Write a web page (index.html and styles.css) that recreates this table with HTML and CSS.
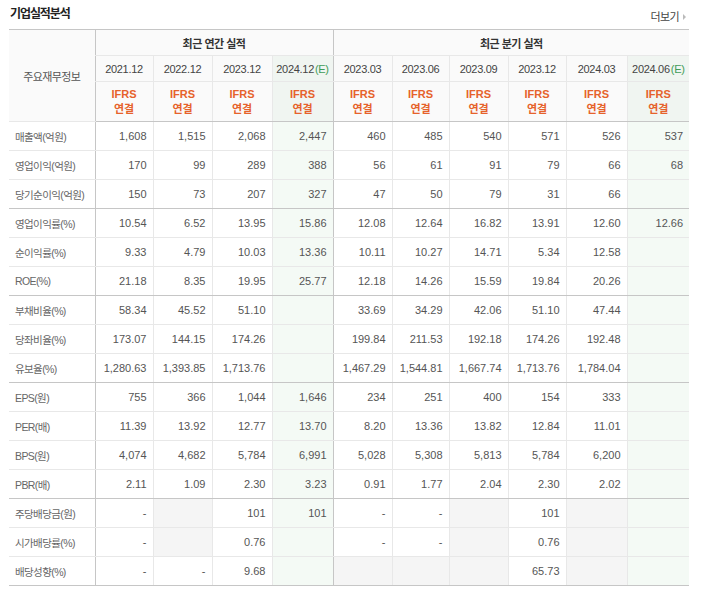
FILE: index.html
```html
<!DOCTYPE html>
<html lang="ko">
<head>
<meta charset="utf-8">
<title>기업실적분석</title>
<link rel="stylesheet" href="styles.css">
</head>
<body>
<div class="wrap">
  <div class="head">
    <h3 class="title">기업실적분석</h3>
    <a class="more" href="#">더보기<span class="tri"></span></a>
  </div>
  <table class="fin">
    <colgroup>
      <col class="c-lbl">
      <col class="c1"><col class="c2"><col class="c3"><col class="c4 ce cg">
      <col class="c5"><col class="c6"><col class="c7"><col class="c8"><col class="c9"><col class="c10 ce clast">
    </colgroup>
    <thead>
      <tr>
        <th class="lbl-h" rowspan="3">주요재무정보</th>
        <th class="grp" colspan="4">최근 연간 실적</th>
        <th class="grp" colspan="6">최근 분기 실적</th>
      </tr>
      <tr class="yr">
        <th>2021.12</th><th>2022.12</th><th>2023.12</th><th class="e">2024.12<span class="est">(E)</span></th>
        <th>2023.03</th><th>2023.06</th><th>2023.09</th><th>2023.12</th><th>2024.03</th><th class="e">2024.06<span class="est">(E)</span></th>
      </tr>
      <tr class="ifrs end">
        <th>IFRS<br>연결</th><th>IFRS<br>연결</th><th>IFRS<br>연결</th><th class="e">IFRS<br>연결</th>
        <th>IFRS<br>연결</th><th>IFRS<br>연결</th><th>IFRS<br>연결</th><th>IFRS<br>연결</th><th>IFRS<br>연결</th><th class="e">IFRS<br>연결</th>
      </tr>
    </thead>
    <tbody>
      <tr><th>매출액(억원)</th><td>1,608</td><td>1,515</td><td>2,068</td><td>2,447</td><td>460</td><td>485</td><td>540</td><td>571</td><td>526</td><td>537</td></tr>
      <tr><th>영업이익(억원)</th><td>170</td><td>99</td><td>289</td><td>388</td><td>56</td><td>61</td><td>91</td><td>79</td><td>66</td><td>68</td></tr>
      <tr class="end"><th>당기순이익(억원)</th><td>150</td><td>73</td><td>207</td><td>327</td><td>47</td><td>50</td><td>79</td><td>31</td><td>66</td><td></td></tr>
      <tr><th>영업이익률(%)</th><td>10.54</td><td>6.52</td><td>13.95</td><td>15.86</td><td>12.08</td><td>12.64</td><td>16.82</td><td>13.91</td><td>12.60</td><td>12.66</td></tr>
      <tr><th>순이익률(%)</th><td>9.33</td><td>4.79</td><td>10.03</td><td>13.36</td><td>10.11</td><td>10.27</td><td>14.71</td><td>5.34</td><td>12.58</td><td></td></tr>
      <tr class="end"><th>ROE(%)</th><td>21.18</td><td>8.35</td><td>19.95</td><td>25.77</td><td>12.18</td><td>14.26</td><td>15.59</td><td>19.84</td><td>20.26</td><td></td></tr>
      <tr><th>부채비율(%)</th><td>58.34</td><td>45.52</td><td>51.10</td><td></td><td>33.69</td><td>34.29</td><td>42.06</td><td>51.10</td><td>47.44</td><td></td></tr>
      <tr><th>당좌비율(%)</th><td>173.07</td><td>144.15</td><td>174.26</td><td></td><td>199.84</td><td>211.53</td><td>192.18</td><td>174.26</td><td>192.48</td><td></td></tr>
      <tr class="end"><th>유보율(%)</th><td>1,280.63</td><td>1,393.85</td><td>1,713.76</td><td></td><td>1,467.29</td><td>1,544.81</td><td>1,667.74</td><td>1,713.76</td><td>1,784.04</td><td></td></tr>
      <tr><th>EPS(원)</th><td>755</td><td>366</td><td>1,044</td><td>1,646</td><td>234</td><td>251</td><td>400</td><td>154</td><td>333</td><td></td></tr>
      <tr><th>PER(배)</th><td>11.39</td><td>13.92</td><td>12.77</td><td>13.70</td><td>8.20</td><td>13.36</td><td>13.82</td><td>12.84</td><td>11.01</td><td></td></tr>
      <tr><th>BPS(원)</th><td>4,074</td><td>4,682</td><td>5,784</td><td>6,991</td><td>5,028</td><td>5,308</td><td>5,813</td><td>5,784</td><td>6,200</td><td></td></tr>
      <tr class="end"><th>PBR(배)</th><td>2.11</td><td>1.09</td><td>2.30</td><td>3.23</td><td>0.91</td><td>1.77</td><td>2.04</td><td>2.30</td><td>2.02</td><td></td></tr>
      <tr><th>주당배당금(원)</th><td>-</td><td class="x"></td><td>101</td><td>101</td><td>-</td><td>-</td><td class="x"></td><td>101</td><td class="x"></td><td></td></tr>
      <tr><th>시가배당률(%)</th><td>-</td><td class="x"></td><td>0.76</td><td></td><td>-</td><td>-</td><td class="x"></td><td>0.76</td><td class="x"></td><td></td></tr>
      <tr class="end"><th>배당성향(%)</th><td>-</td><td>-</td><td>9.68</td><td></td><td class="x"></td><td class="x"></td><td class="x"></td><td>65.73</td><td class="x"></td><td></td></tr>
    </tbody>
  </table>
</div>
</body>
</html>
```

FILE: styles.css
```css
html, body {
  margin: 0;
  padding: 0;
  background: #ffffff;
}

body {
  font-family: "Liberation Sans", "Noto Sans CJK KR", sans-serif;
  color: #555555;
}

.wrap {
  width: 680px;
  margin-left: 9px;
}

.head {
  display: flex;
  justify-content: space-between;
  align-items: flex-start;
  height: 29px;
}

.title {
  margin: 0 0 0 1px;
  font-size: 12px;
  font-weight: bold;
  letter-spacing: -1.1px;
  line-height: 28px;
  color: #222222;
}

.more {
  display: flex;
  align-items: center;
  margin-top: 9px;
  margin-right: 3px;
  font-size: 11px;
  line-height: 16px;
  letter-spacing: -0.6px;
  color: #444444;
  text-decoration: none;
}

.tri {
  width: 0;
  height: 0;
  margin-left: 4px;
  border-top: 3px solid transparent;
  border-bottom: 3px solid transparent;
  border-left: 3px solid #bbbbbb;
}

.fin {
  width: 680px;
  border-collapse: collapse;
  table-layout: fixed;
  font-size: 11px;
}

.fin col { border-right: 1px solid #e8e8e8; }
.fin col.c-lbl { width: 86px; border-right-color: #c6c6c6; }
.fin col.c1 { width: 58px; }
.fin col.c2 { width: 59px; }
.fin col.c3 { width: 60px; }
.fin col.c4 { width: 61px; }
.fin col.c5 { width: 59px; }
.fin col.c6 { width: 57px; }
.fin col.c7 { width: 59px; }
.fin col.c8 { width: 58px; }
.fin col.c9 { width: 61px; }
.fin col.c10 { width: 62px; }
.fin col.ce { background: #f4faf5; }
.fin col.cg { border-right-color: #c6c6c6; }
.fin col.clast { border-right: none; }

.fin th,
.fin td {
  border-top: 1px solid #e8e8e8;
  border-bottom: 1px solid #e8e8e8;
  border-left: none;
  border-right: none;
  padding: 0 6px;
  white-space: nowrap;
  overflow: hidden;
}

.fin thead th {
  background: #fafafa;
  font-weight: normal;
  text-align: center;
  padding: 0;
}

.fin thead tr:first-child th {
  border-top-color: #c6c6c6;
  height: 25px;
}

.fin thead th.e { background: #f0f5f1; }

.fin .grp {
  font-weight: bold;
  color: #333333;
  letter-spacing: -0.5px;
}

.fin .lbl-h {
  color: #555555;
  letter-spacing: -0.6px;
}

.fin .grp:nth-child(2) {
  border-right: 1px solid #c6c6c6;
}

.fin .yr th {
  height: 25px;
  color: #444444;
  letter-spacing: -0.3px;
}

.est {
  color: #3f9c58;
  margin-left: 1px;
}

.fin .ifrs th {
  height: 39px;
  font-weight: bold;
  color: #e6622b;
  line-height: 15px;
}

.fin tr.end > th,
.fin tr.end > td {
  border-bottom-color: #c6c6c6;
}

.fin tbody th {
  height: 28px;
  text-align: left;
  font-weight: normal;
  font-size: 10.5px;
  letter-spacing: -0.6px;
  color: #666666;
  padding-left: 6px;
}

.fin tbody td {
  text-align: right;
  color: #555555;
}

.fin tbody td.x {
  background: #f5f5f5;
}
```
